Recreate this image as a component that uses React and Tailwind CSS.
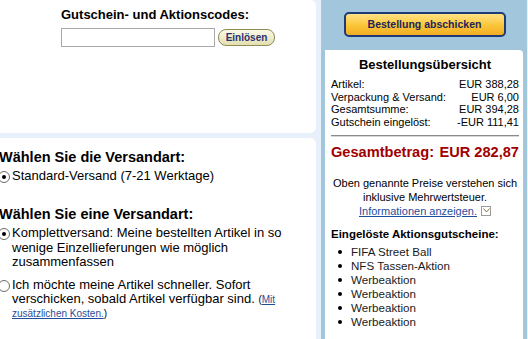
import React from 'react';

const Radio = ({ checked }) => (
    <span className="mt-[2px] ml-[-2px] w-[12px] h-[12px] shrink-0 rounded-full border border-[#6b6b6b] bg-white flex items-center justify-center">
        {checked && <span className="w-[4px] h-[4px] rounded-full bg-black" />}
    </span>
);

const Row = ({ label, value }) => (
    <div className="flex justify-between leading-[12.7px] text-[11px] text-black whitespace-nowrap">
        <span>{label}</span>
        <span>{value}</span>
    </div>
);

const promos = ['FIFA Street Ball', 'NFS Tassen-Aktion', 'Werbeaktion', 'Werbeaktion', 'Werbeaktion', 'Werbeaktion'];

const App = () => {
    return (
        <div className="w-[528px] h-[339px] overflow-hidden flex bg-[#e8f1fb] font-['Liberation_Sans',Arial,sans-serif] text-black">
            {/* Left column */}
            <div className="w-[316px] shrink-0 flex flex-col gap-[5px]">
                <div className="h-[133px] bg-white rounded-r-[6px] pl-[61px] pt-[7px]">
                    <h2 className="text-[13px] font-bold leading-[16px]">Gutschein- und Aktionscodes:</h2>
                    <div className="flex items-center gap-[3px] mt-[5px]">
                        <input
                            type="text"
                            className="w-[154px] h-[19px] border border-[#a9a9a9] bg-white outline-none"
                        />
                        <button className="h-[17px] w-[57px] rounded-[8px] border border-[#8f8c55] bg-gradient-to-b from-[#fbfae8] to-[#e2dfb0] text-[10px] font-bold text-[#2d3070] leading-none flex items-center justify-center">
                            Einlösen
                        </button>
                    </div>
                </div>
                <div className="flex-1 bg-white rounded-tr-[6px] pt-[11px]">
                    <h2 className="text-[14.5px] font-bold leading-[16px] ml-[-1px] whitespace-nowrap">Wählen Sie die Versandart:</h2>
                    <label className="flex gap-[2px] mt-[4px] text-[13px] leading-[14px]">
                        <Radio checked />
                        <span>Standard-Versand (7-21 Werktage)</span>
                    </label>

                    <h2 className="text-[14.5px] font-bold leading-[16px] ml-[-1px] mt-[23px] whitespace-nowrap">Wählen Sie eine Versandart:</h2>
                    <label className="flex gap-[2px] mt-[4px] text-[13px] leading-[14.5px]">
                        <Radio checked />
                        <span className="w-[288px]">Komplettversand: Meine bestellten Artikel in so wenige Einzellieferungen wie möglich zusammenfassen</span>
                    </label>
                    <label className="flex gap-[2px] mt-[8px] text-[13px] leading-[14px]">
                        <Radio />
                        <span className="w-[288px]">
                            Ich möchte meine Artikel schneller. Sofort verschicken, sobald Artikel verfügbar sind.{' '}
                            <span className="text-[10px] leading-[10px]">
                                (<a href="#" className="text-[#1f4e9c] underline">Mit zusätzlichen Kosten.</a>)
                            </span>
                        </span>
                    </label>
                </div>
            </div>

            {/* Right column */}
            <div className="ml-[5px] w-[206px] shrink-0 bg-[#a2c6db] px-[4px] pt-[12px] flex flex-col">
                <div className="flex justify-center pl-[1px]">
                    <button className="w-[162px] h-[25px] rounded-[5px] border-2 border-[#1e3a78] bg-gradient-to-b from-[#ffe282] via-[#fcc83c] to-[#f2ad1e] text-[10.5px] text-[#1c2458] font-bold leading-none">
                        Bestellung abschicken
                    </button>
                </div>
                <div className="mt-[13px] flex-1 bg-white rounded-tr-[4px] pl-[6px] pr-[4px] pt-[7px]">
                    <h3 className="text-center text-[13px] font-bold leading-[16px]">Bestellungsübersicht</h3>
                    <div className="mt-[5px]">
                        <Row label="Artikel:" value="EUR 388,28" />
                        <Row label="Verpackung & Versand:" value="EUR 6,00" />
                        <Row label="Gesamtsumme:" value="EUR 394,28" />
                        <Row label="Gutschein eingelöst:" value="-EUR 111,41" />
                    </div>
                    <div className="mt-[6px] border-t border-[#8a8a8a] border-b border-b-[#d8d8d8]" />
                    <div className="mt-[5px] flex justify-between text-[14.6px] font-bold text-[#a00000] leading-[20px] whitespace-nowrap">
                        <span>Gesamtbetrag:</span>
                        <span>EUR 282,87</span>
                    </div>
                    <div className="mt-[14px] text-center text-[11px] leading-[14px]">
                        <p>Oben genannte Preise verstehen sich</p>
                        <p>inklusive Mehrwertsteuer.</p>
                        <p className="flex justify-center items-center gap-[4px]">
                            <a href="#" className="text-[#1f4e9c] underline">Informationen anzeigen.</a>
                            <span className="w-[10px] h-[10px] border border-[#9a9a9a] flex items-center justify-center">
                                <svg width="7" height="5" viewBox="0 0 7 5">
                                    <path d="M0.5 0.5 L3.5 4 L6.5 0.5" fill="none" stroke="#8a7a3a" strokeWidth="1" />
                                </svg>
                            </span>
                        </p>
                    </div>
                    <h4 className="mt-[9px] text-[11.5px] font-bold leading-[14px]">Eingelöste Aktionsgutscheine:</h4>
                    <ul className="mt-[4px]">
                        {promos.map((p, i) => (
                            <li key={i} className="flex items-center text-[11.6px] leading-[14px] h-[14px]">
                                <span className="ml-[7px] w-[4px] h-[4px] rounded-full bg-black" />
                                <span className="ml-[9px] text-[#1a1a1a]">{p}</span>
                            </li>
                        ))}
                    </ul>
                </div>
            </div>
        </div>
    );
};

export default App;
